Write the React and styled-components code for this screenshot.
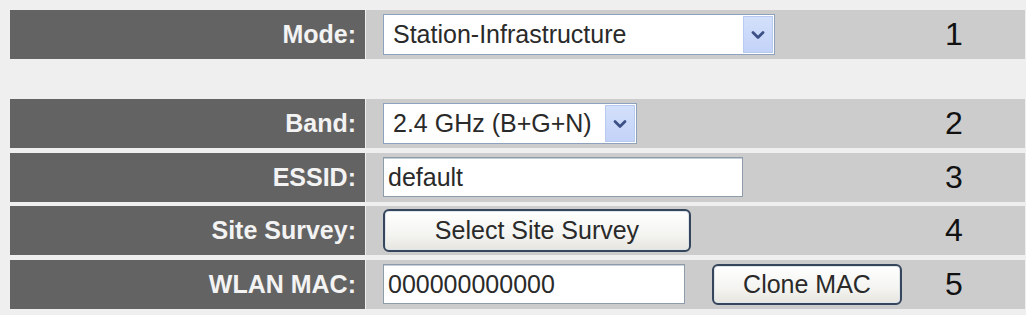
import React from "react";
import styled, { createGlobalStyle } from "styled-components";

const GlobalStyle = createGlobalStyle`
  html, body {
    margin: 0;
    padding: 0;
    background: #efefef;
    font-family: "Liberation Sans", Arial, sans-serif;
  }
`;

const Page = styled.div`
  padding: 10px 1px 0 10px;
  width: 1015px;
`;

const Form = styled.div`
  display: flex;
  flex-direction: column;
  gap: 4.5px;
`;

const Row = styled.div`
  display: grid;
  grid-template-columns: 355px 1fr;
  column-gap: 1px;
  height: 49px;
  margin-top: ${(p) => (p.$spaced ? "35.5px" : "0")};
`;

const Label = styled.div`
  background: #636363;
  color: #f3f3f3;
  font-weight: bold;
  font-size: 25px;
  display: flex;
  align-items: center;
  justify-content: flex-end;
  padding-right: 9px;
`;

const Value = styled.div`
  background: #cccccc;
  display: grid;
  grid-template-columns: 1fr 60px;
  align-items: center;
  padding-left: 17px;
  padding-right: 41px;
`;

const Controls = styled.div`
  display: flex;
  align-items: center;
  gap: 27px;
`;

const Num = styled.div`
  text-align: center;
  font-size: 32px;
  color: #111;
`;

const SelectBox = styled.div`
  box-sizing: border-box;
  width: ${(p) => p.$w}px;
  height: 41px;
  border: 1px solid #8fa2bd;
  background: #fff;
  display: flex;
  align-items: stretch;
  padding: 1px;
`;

const SelectText = styled.div`
  flex: 1;
  display: flex;
  align-items: center;
  padding-left: 8px;
  font-size: 25px;
  color: #2a2a2a;
  white-space: nowrap;
`;

const ArrowBox = styled.div`
  width: 30px;
  display: flex;
  align-items: center;
  justify-content: center;
  background: linear-gradient(180deg, #d3e0fb 0%, #c3d3f8 100%);
  border: 1px solid #b9caf0;
  box-sizing: border-box;
`;

const TextInput = styled.input`
  box-sizing: border-box;
  width: ${(p) => p.$w}px;
  height: 40px;
  border: 1px solid #8e9bab;
  box-shadow: inset 0 1px 0 #c8ced6;
  background: #fff;
  font-family: "Liberation Sans", Arial, sans-serif;
  font-size: 25px;
  color: #2a2a2a;
  padding: 0 0 0 4px;
  outline: none;
`;

const Button = styled.button`
  box-sizing: border-box;
  width: ${(p) => p.$w}px;
  height: ${(p) => p.$h}px;
  border: 2px solid #35455b;
  border-radius: 6px;
  background: linear-gradient(180deg, #ffffff 0%, #f4f4f1 60%, #e6e5df 100%);
  box-shadow: inset 0 0 0 1px #dfe4ea;
  font-family: "Liberation Sans", Arial, sans-serif;
  font-size: 25px;
  color: #2a2a2a;
  padding: 0;
  display: flex;
  align-items: center;
  justify-content: center;
`;

const Chevron = () => (
  <svg width="14" height="10" viewBox="0 0 14 10">
    <path d="M2 2.5 L7 7.5 L12 2.5" fill="none" stroke="#3c5086" strokeWidth="2.8" strokeLinecap="round" strokeLinejoin="round" />
  </svg>
);

const Select = ({ w, children }) => (
  <SelectBox $w={w}>
    <SelectText>{children}</SelectText>
    <ArrowBox>
      <Chevron />
    </ArrowBox>
  </SelectBox>
);

export default function App() {
  return (
    <>
      <GlobalStyle />
      <Page>
        <Form>
          <Row>
            <Label>Mode:</Label>
            <Value>
              <Controls>
                <Select w={392}>Station-Infrastructure</Select>
              </Controls>
              <Num>1</Num>
            </Value>
          </Row>
          <Row $spaced>
            <Label>Band:</Label>
            <Value>
              <Controls>
                <Select w={254}>2.4 GHz (B+G+N)</Select>
              </Controls>
              <Num>2</Num>
            </Value>
          </Row>
          <Row>
            <Label>ESSID:</Label>
            <Value>
              <Controls>
                <TextInput $w={360} readOnly value="default" />
              </Controls>
              <Num>3</Num>
            </Value>
          </Row>
          <Row>
            <Label>Site Survey:</Label>
            <Value>
              <Controls>
                <Button $w={308} $h={43}>Select Site Survey</Button>
              </Controls>
              <Num>4</Num>
            </Value>
          </Row>
          <Row>
            <Label>WLAN MAC:</Label>
            <Value>
              <Controls>
                <TextInput $w={302} readOnly value="000000000000" />
                <Button $w={190} $h={41}>Clone MAC</Button>
              </Controls>
              <Num>5</Num>
            </Value>
          </Row>
        </Form>
      </Page>
    </>
  );
}
